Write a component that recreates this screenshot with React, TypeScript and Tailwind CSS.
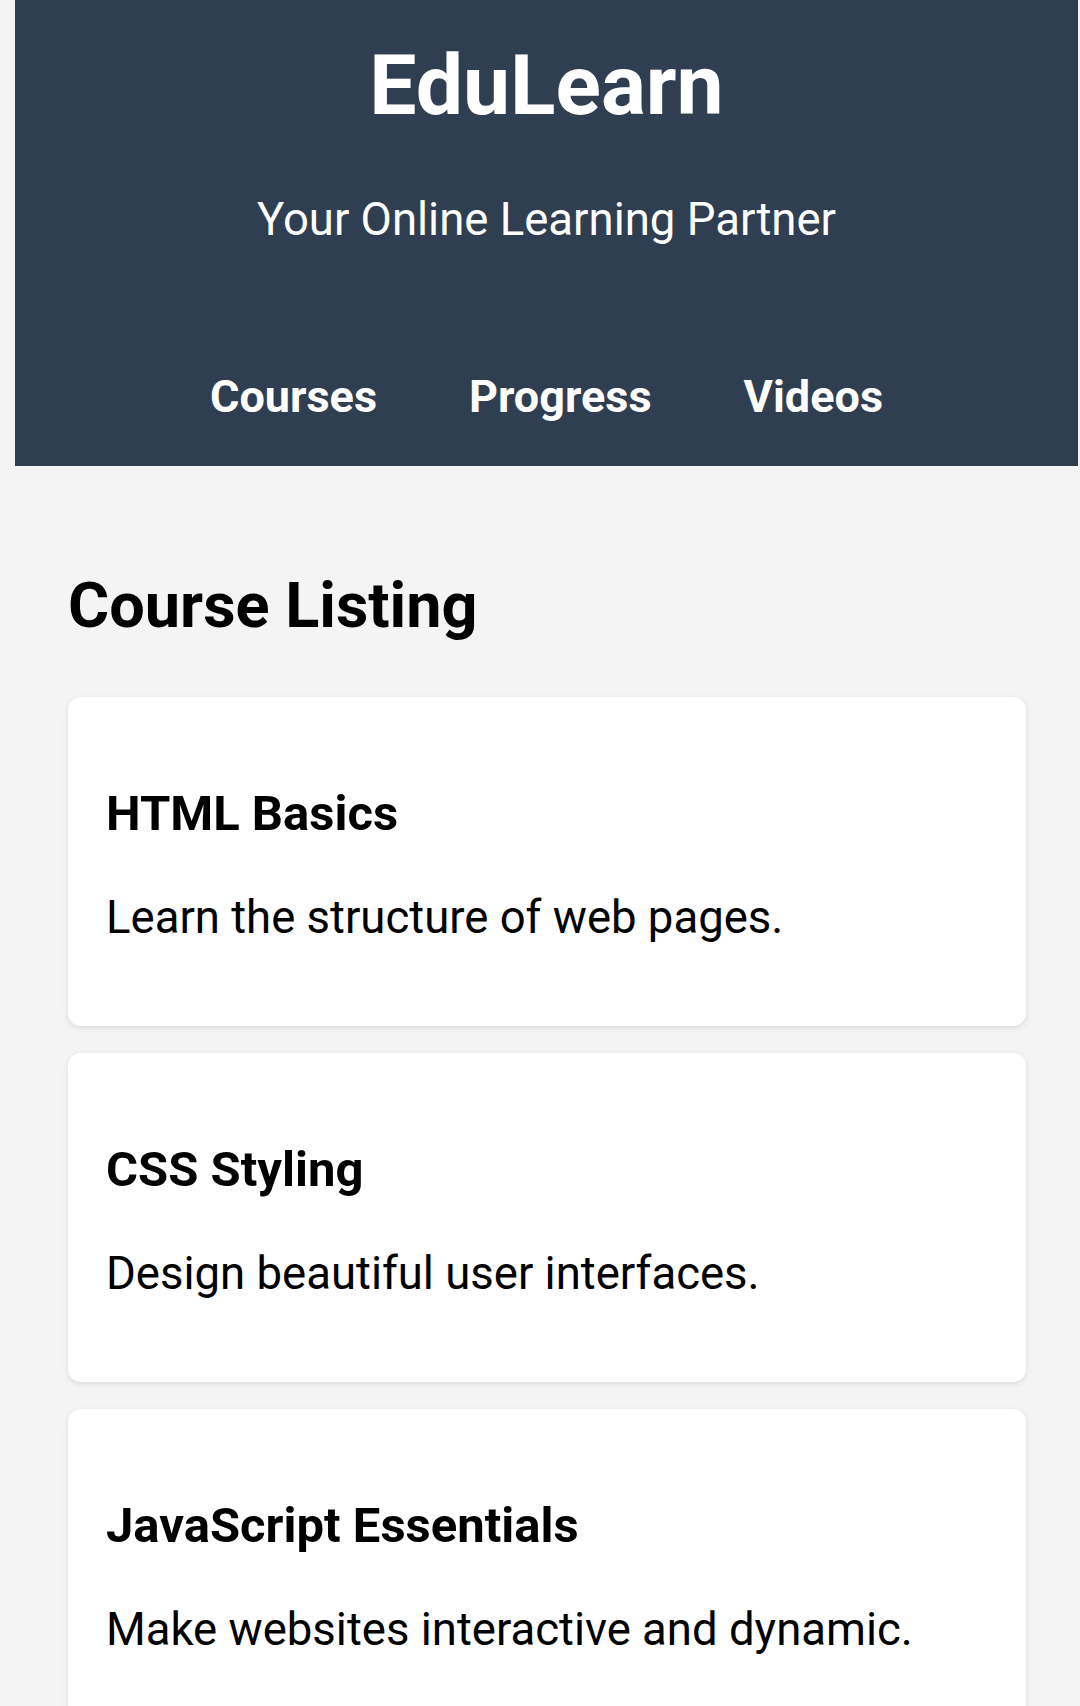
const courses = [
  { title: 'HTML Basics', text: 'Learn the structure of web pages.' },
  { title: 'CSS Styling', text: 'Design beautiful user interfaces.' },
  { title: 'JavaScript Essentials', text: 'Make websites interactive and dynamic.' },
];

const navLinks = ['Courses', 'Progress', 'Videos'];

export default function App() {
  return (
    <div className="min-h-[1706px] bg-[#f4f4f4] font-['Roboto','Liberation_Sans',sans-serif]">
      <div className="ml-[15px] mr-[2px]">
        <header className="bg-[#2f3e50] text-white text-center pt-[44px] pb-[47px]">
          <h1 className="text-[84px] leading-[84px] font-bold">EduLearn</h1>
          <p className="mt-[69px] text-[45.5px] leading-[46px]">Your Online Learning Partner</p>
          <nav className="mt-[131px] flex justify-center gap-[92px]">
            {navLinks.map((link) => (
              <a key={link} href="#" className="text-[45px] leading-[45px] font-bold text-white">
                {link}
              </a>
            ))}
          </nav>
        </header>

        <main className="pl-[53px] pr-[52px] pt-[108px]">
          <h2 className="text-[63px] leading-[63px] font-bold text-black">Course Listing</h2>
          <div className="mt-[60px] flex flex-col gap-[27px]">
            {courses.map((course) => (
              <div
                key={course.title}
                className="bg-white rounded-[13px] shadow-[0_2px_6px_rgba(0,0,0,0.1)] pl-[38px] pr-[38px] pt-[92px] pb-[85px]"
              >
                <h3 className="text-[49px] leading-[49px] font-bold text-black">{course.title}</h3>
                <p className="mt-[57px] text-[45.5px] leading-[46px] text-black">{course.text}</p>
              </div>
            ))}
          </div>
        </main>
      </div>
    </div>
  );
}
